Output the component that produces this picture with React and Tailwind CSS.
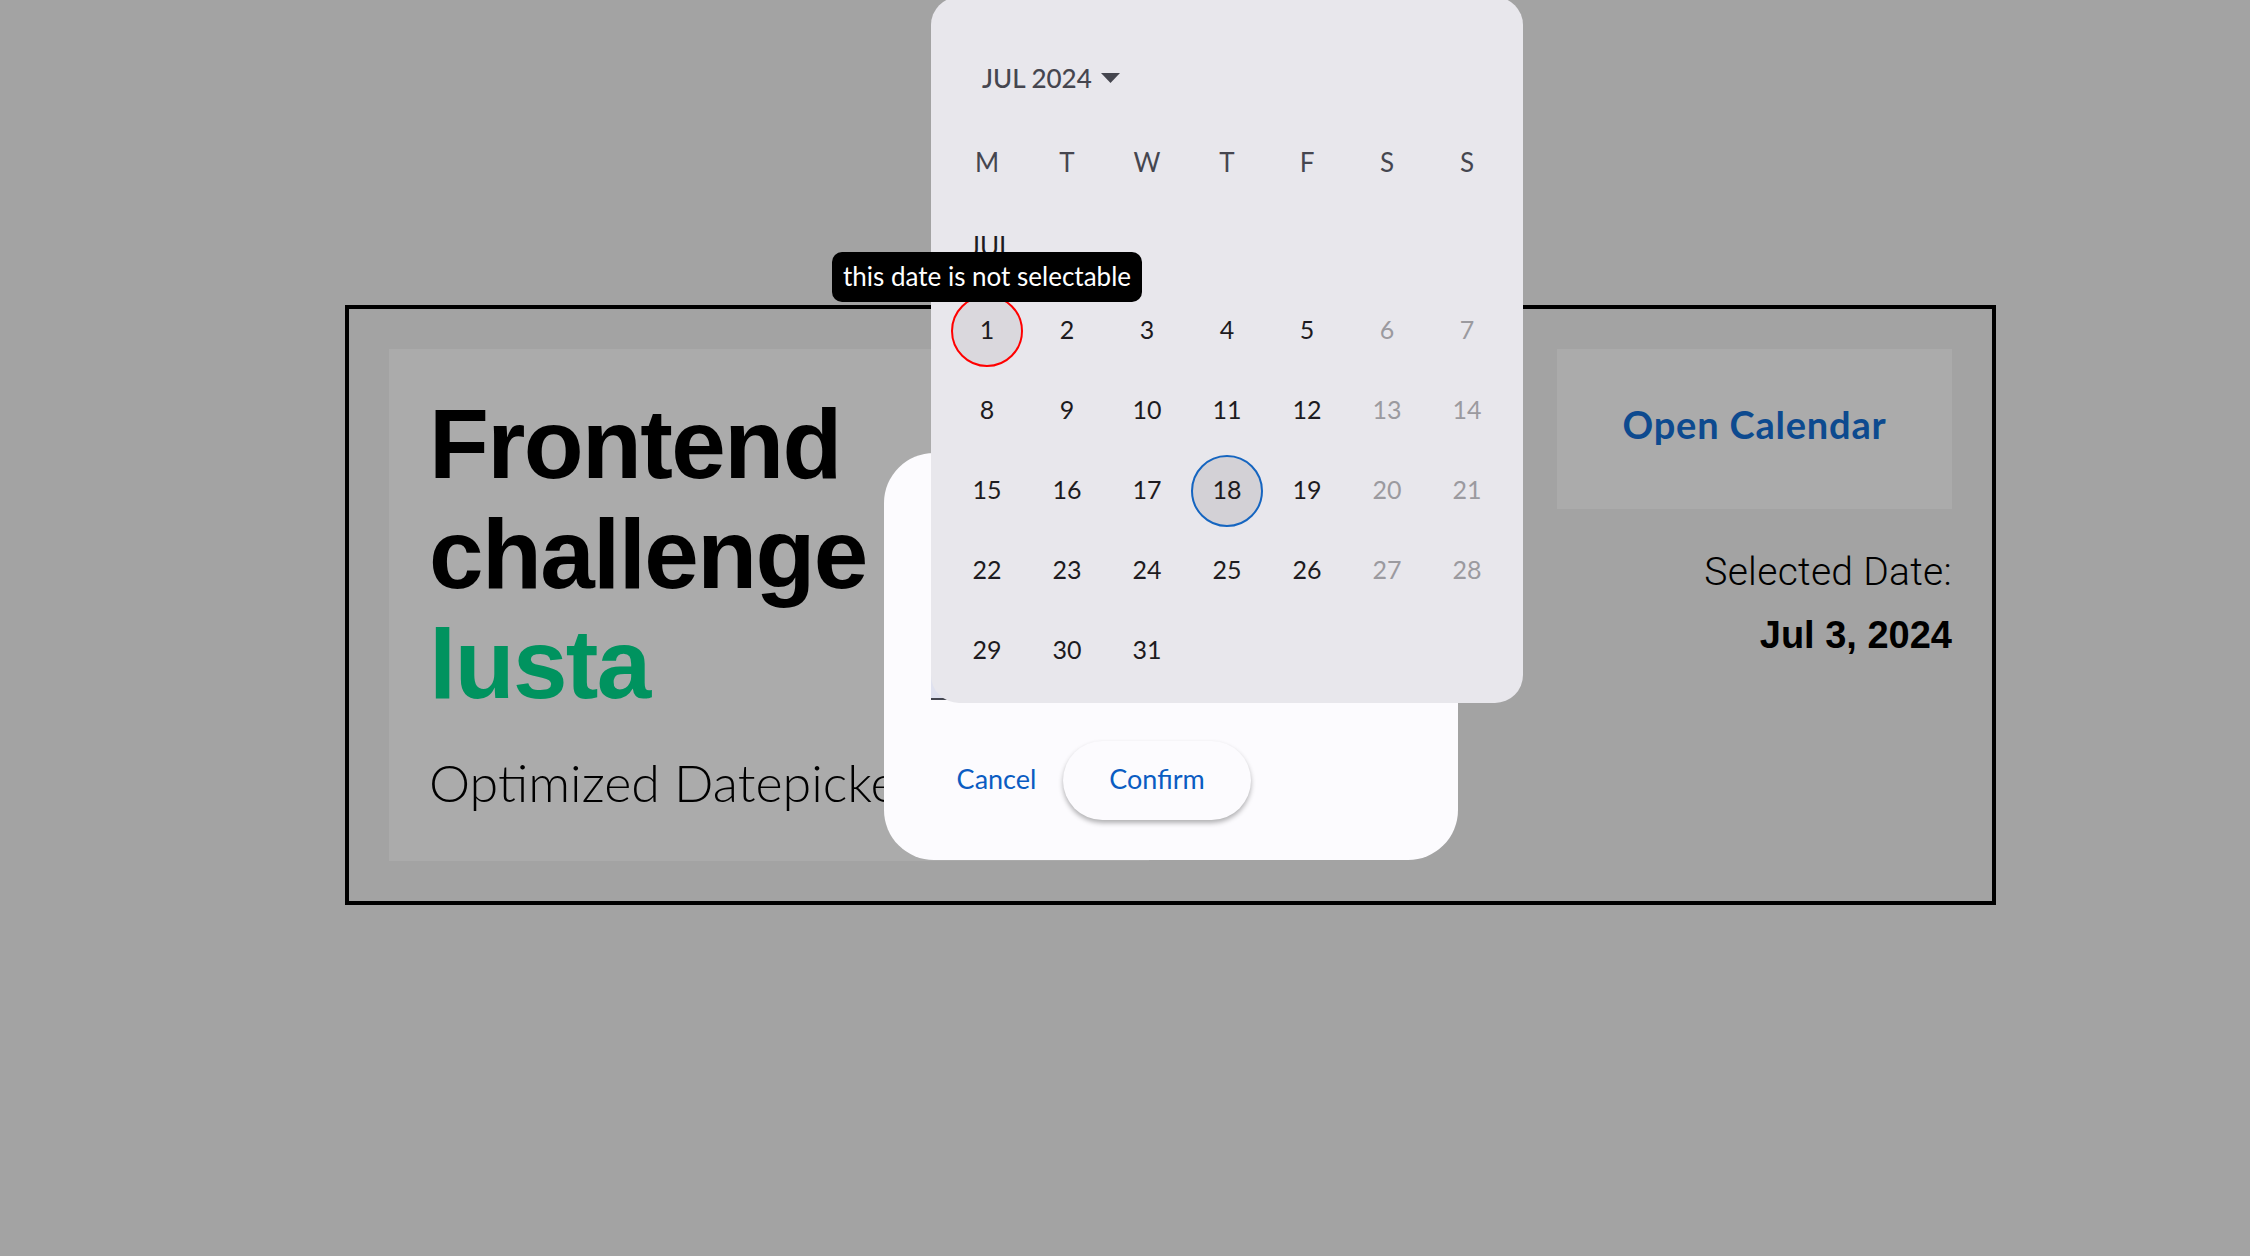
import React from "react";

const weekdays = ["M", "T", "W", "T", "F", "S", "S"];

const weeks = [
  [1, 2, 3, 4, 5, 6, 7],
  [8, 9, 10, 11, 12, 13, 14],
  [15, 16, 17, 18, 19, 20, 21],
  [22, 23, 24, 25, 26, 27, 28],
  [29, 30, 31, null, null, null, null],
];

const DayCell = ({ day, col }) => {
  if (!day) return <div className="h-[80px] w-[80px]" />;
  const weekend = col >= 5;
  let circle = "border-2 border-transparent";
  if (day === 1) circle = "border-2 border-[#ff0000] bg-[#dad8dd]";
  if (day === 18) circle = "border-2 border-[#1565c0] bg-[#d3d1d6]";
  return (
    <div className="flex h-[80px] w-[80px] items-center justify-center">
      <div
        className={`flex h-[72px] w-[72px] items-center justify-center rounded-full pb-[2px] ${circle}`}
      >
        <span
          className={`text-[25px] ${weekend ? "text-[#9b9a9f]" : "text-[#1d1b20]"}`}
        >
          {day}
        </span>
      </div>
    </div>
  );
};

const App = () => {
  return (
    <div className="relative min-h-[1256px] w-full overflow-hidden bg-[#a3a3a3]">
      {/* page content */}
      <div className="pl-[345px] pt-[305px]">
        <div className="flex w-[1651px] justify-between border-[4px] border-black p-[40px]">
          <div className="h-[512px] w-[760px] bg-[#ababab] pl-[40px] pt-[40px]">
            <h1 className="font-['Liberation_Sans',Arial,sans-serif] text-[98px] font-bold leading-[110px] tracking-[-1.6px] text-black">
              Frontend
              <br />
              challenge
              <br />
              <span className="text-[#00935f]">lusta</span>
            </h1>
            <p className="mt-[33px] font-['Lato',sans-serif] text-[52px] font-light leading-[60px] text-black">
              Optimized Datepicker
            </p>
          </div>

          <div className="flex w-[395px] flex-col items-end">
            <button className="flex h-[160px] w-full items-center justify-center bg-[#ababab] pb-[10px] font-['Lato',sans-serif] text-[38px] font-bold tracking-[0.8px] text-[#0d4a8f]">
              Open Calendar
            </button>
            <p className="mt-[41px] font-['Roboto',sans-serif] text-[39px] font-light leading-[44px] tracking-[0.3px] text-black">
              Selected Date:
            </p>
            <p className="mt-[19px] font-['Liberation_Sans',Arial,sans-serif] text-[38px] font-bold leading-[44px] text-black">
              Jul 3, 2024
            </p>
          </div>
        </div>
      </div>

      {/* dialog */}
      <div className="absolute left-[884px] top-[453px] h-[407px] w-[574px] rounded-[50px] bg-[#fcfbfe] px-[47px] pt-[167px] font-['Lato',sans-serif]">
        <div className="h-[80px] w-full rounded-t-[4px] border-b-2 border-[#44464f] bg-[#dfe1ee]" />
        <div className="ml-[9px] mt-[40px] flex h-[80px] items-center gap-[10px]">
          <button className="flex h-[80px] w-[113px] items-center justify-center pb-[2px] text-[27px] text-[#0b5cc2]">
            Cancel
          </button>
          <button className="flex h-[79px] w-[188px] items-center justify-center rounded-full bg-[#fcfbfe] pb-[2px] text-[27px] text-[#0b5cc2] shadow-[0_3px_5px_rgba(0,0,0,0.3)]">
            Confirm
          </button>
        </div>
      </div>

      {/* calendar popup */}
      <div className="absolute left-[931px] top-[-3px] w-[592px] rounded-[28px] bg-[#e8e7ec] px-[16px] pb-[12px] pt-[53px] font-['Lato',sans-serif]">
        <div className="flex h-[56px] items-center pl-[35px]">
          <span className="text-[26px] font-medium text-[#45464f]">JUL 2024</span>
          <svg width="19" height="10" viewBox="0 0 19 10" className="ml-[9px]">
            <path d="M0 0 L19 0 L9.5 10 Z" fill="#45464f" />
          </svg>
        </div>
        <div className="mt-[16px] grid h-[80px] grid-cols-7 items-center">
          {weekdays.map((d, i) => (
            <span key={i} className="text-center text-[26px] text-[#45464f]">
              {d}
            </span>
          ))}
        </div>
        <div className="flex h-[89px] items-center pl-[22px]">
          <span className="text-[26px] text-[#1d1b20]">JUL</span>
        </div>
        {weeks.map((week, r) => (
          <div key={r} className="grid grid-cols-7">
            {week.map((day, c) => (
              <DayCell key={c} day={day} col={c} />
            ))}
          </div>
        ))}
      </div>

      {/* tooltip */}
      <div className="absolute left-[832px] top-[252px] flex h-[50px] w-[310px] items-center justify-center rounded-[10px] bg-black pb-[2px] font-['Lato',sans-serif] text-[26px] text-white">
        this date is not selectable
      </div>
    </div>
  );
};

export default App;
